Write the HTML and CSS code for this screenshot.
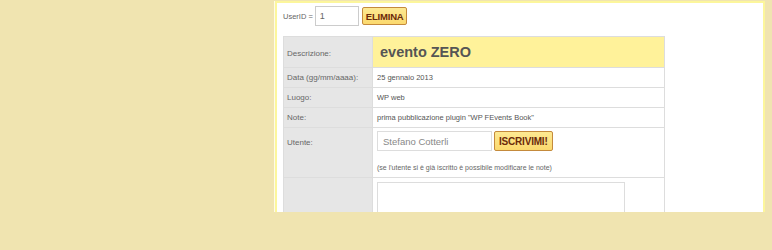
FILE: index.html
```html
<!DOCTYPE html>
<html lang="it">
 <head>
  <title>WP FEvents Book</title>
  <meta charset="utf-8"/>
  <link rel="stylesheet" href="styles.css">
 </head>
 <body>
	<div id="wrap">
		<div id="panel">
			<p class="user">
				<label for="userid">UserID =</label><input id="userid" type="text" value="1"/>
				<input class="btn" type="button" value="ELIMINA"/>
			</p>
			<table class="evento">
				<tr class="r-desc">
					<th>Descrizione:</th>
					<td class="titolo">evento ZERO</td>
				</tr>
				<tr class="r-s">
					<th>Data (gg/mm/aaaa):</th>
					<td>25 gennaio 2013</td>
				</tr>
				<tr class="r-s">
					<th>Luogo:</th>
					<td>WP web</td>
				</tr>
				<tr class="r-s">
					<th>Note:</th>
					<td>prima pubblicazione plugin "WP FEvents Book"</td>
				</tr>
				<tr class="r-user">
					<th>Utente:</th>
					<td>
						<p class="iscr"><input id="nome" type="text" value="Stefano Cotterli"/><input class="btn big" type="button" value="ISCRIVIMI!"/></p>
						<p class="info">(se l'utente si è già iscritto è possibile modificare le note)</p>
					</td>
				</tr>
				<tr class="r-note">
					<th></th>
					<td><textarea></textarea></td>
				</tr>
			</table>
		</div>
	</div>
	<div id="foot"></div>
 </body>
</html>
```

FILE: styles.css
```css
*{margin:0; padding:0;}
input, textarea{box-sizing:border-box;}
html, body{background-color:#f0e4b0; overflow:hidden;}
body{font-family:"Liberation Sans", Arial, sans-serif; color:#555; -webkit-font-smoothing:antialiased;}

#wrap{height:212px; overflow:hidden;}
#panel{margin:1px 0 0 275px; width:480px; height:260px; padding:3px 0 0 6px;
border:2px solid #fcf69c; background-color:#fff; box-shadow:-1px 0 0 #fffbe6;}

.user{height:20px; display:flex; align-items:center;}
.user label{font-size:7.5px; color:#666; margin-right:2px;}
#userid{width:44px; height:20px; border:1px solid #ccc; font-size:9px; color:#666; padding-left:4px;
font-family:"Liberation Sans", Arial, sans-serif;}

.btn{height:18px; padding:0 3px; margin-left:3px; border:1px solid #c48a3c; border-radius:2px;
background:linear-gradient(#fde992, #fbd96e); color:#6b2a0a; font-weight:bold; font-size:9.5px;
font-family:"Liberation Sans Narrow", "Liberation Sans", Arial, sans-serif; letter-spacing:-0.2px;}
.btn.big{height:20px; font-size:10px; margin-left:2px; padding:0 4px;}

.evento{margin-top:10px; width:382px; border-collapse:collapse; border:1px solid #ddd;}
.evento th, .evento td{border:1px solid #ddd; text-align:left;}
.evento th{width:85px; background-color:#e6e6e6; font-size:8px; font-weight:normal; color:#666;
padding-left:3px; font-family:"Liberation Sans", Arial, sans-serif;}
.evento td{font-size:7.5px; padding-left:4px; color:#555;}

.r-desc{height:31px;}
.r-desc th{padding-top:3px;}
.titolo{background-color:#fff29a; font-size:14.5px !important; font-weight:bold; color:#555 !important;
padding-left:7px !important;}
.r-s{height:20px;}
.r-user{height:50px;}
.r-user th{vertical-align:top; padding-top:10px;}
.r-user td{vertical-align:top; padding-top:3px;}
.iscr{display:flex; align-items:center; height:20px;}
#nome{width:115px; height:20px; border:1px solid #ddd; font-size:9.5px; color:#888; padding-left:5px;
font-family:"Liberation Sans", Arial, sans-serif;}
.info{margin-top:13px; font-size:7px; color:#666;}

.r-note{height:60px;}
.r-note td{vertical-align:top; padding-top:4px;}
.r-note textarea{width:248px; height:60px; border:1px solid #ddd; resize:none; display:block;}

#foot{height:38px;}
```
